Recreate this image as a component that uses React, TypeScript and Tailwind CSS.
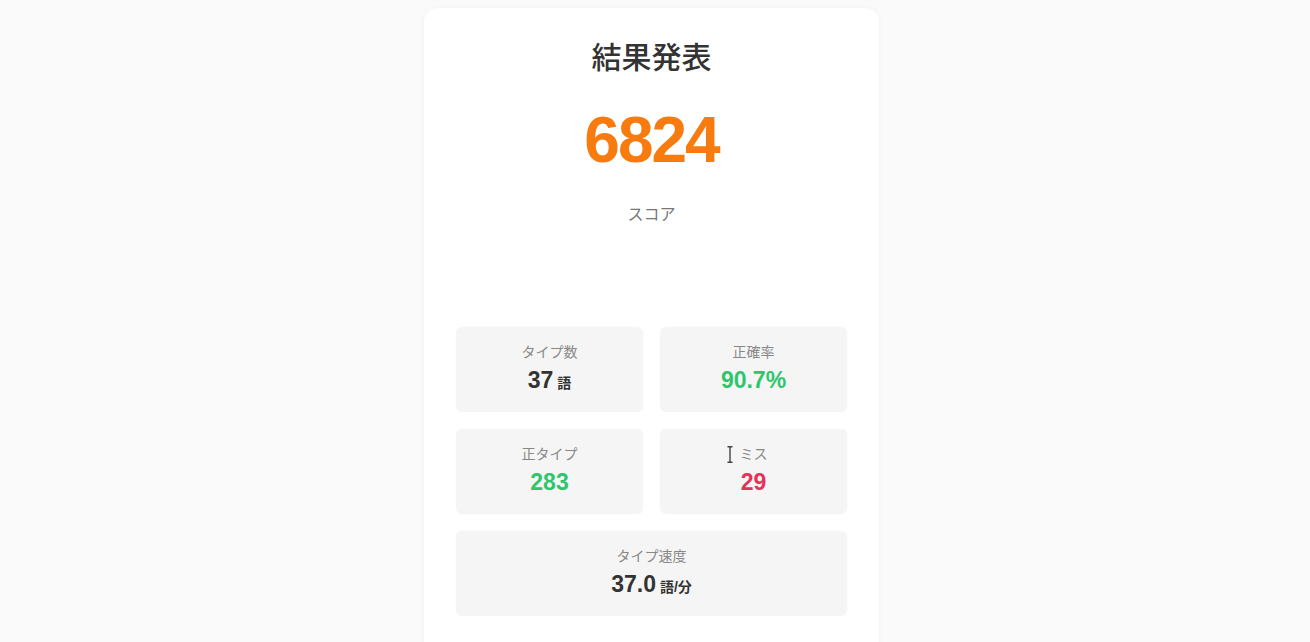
import React from "react";

const jp = { fontFamily: '"Liberation Sans", "Noto Sans CJK JP", sans-serif' };

function Stat({
  label,
  children,
  extra,
}: {
  label: string;
  children: React.ReactNode;
  extra?: React.ReactNode;
}) {
  return (
    <div className="relative flex h-[85px] flex-col items-center rounded-md bg-[#f5f5f5] pt-[16px] shadow-[0_0_2px_rgba(0,0,0,0.03)]">
      {extra}
      <div className="text-[14px] leading-[18px] text-[#888]">{label}</div>
      <div className="mt-[5px] flex items-baseline text-[23px] font-bold leading-[28px]">{children}</div>
    </div>
  );
}

export default function App() {
  return (
    <div className="min-h-[642px] bg-[#fafafa]" style={jp}>
      <div className="flex justify-center pr-[7px] pt-[8px]">
        <div className="w-[455px] rounded-t-[14px] bg-white px-[32px] pt-[32px] pb-[40px] shadow-[0_0_6px_rgba(0,0,0,0.04)]">
          <h1 className="text-center text-[30px] font-medium leading-[36px] text-[#333]">結果発表</h1>
          <div className="mt-[32px] text-center text-[64px] font-bold leading-[64px] tracking-[-2px] text-[#f77b0f]">6824</div>
          <div className="mt-[33px] text-center text-[16px] leading-[20px] text-[#777]">スコア</div>
          <div className="mt-[102px] grid grid-cols-2 gap-x-[17px] gap-y-[17px]">
            <Stat label="タイプ数">
              <span className="text-[#333]">37</span>
              <span className="ml-[4px] text-[14px] text-[#333]">語</span>
            </Stat>
            <Stat label="正確率">
              <span className="text-[#2ec66c]">90.7%</span>
            </Stat>
            <Stat label="正タイプ">
              <span className="text-[#2ec66c]">283</span>
            </Stat>
            <Stat
              label="ミス"
              extra={
                <svg className="absolute left-[67px] top-[17px]" width="6" height="17" viewBox="0 0 6 17">
                  <path d="M0.5 0.8 H5.5 M3 0.8 V16.2 M0.5 16.2 H5.5" stroke="#444" strokeWidth="1.4" fill="none" />
                </svg>
              }
            >
              <span className="text-[#e0345a]">29</span>
            </Stat>
            <div className="col-span-2">
              <Stat label="タイプ速度">
                <span className="text-[#333]">37.0</span>
                <span className="ml-[4px] text-[14px] text-[#333]">語/分</span>
              </Stat>
            </div>
          </div>
        </div>
      </div>
    </div>
  );
}
